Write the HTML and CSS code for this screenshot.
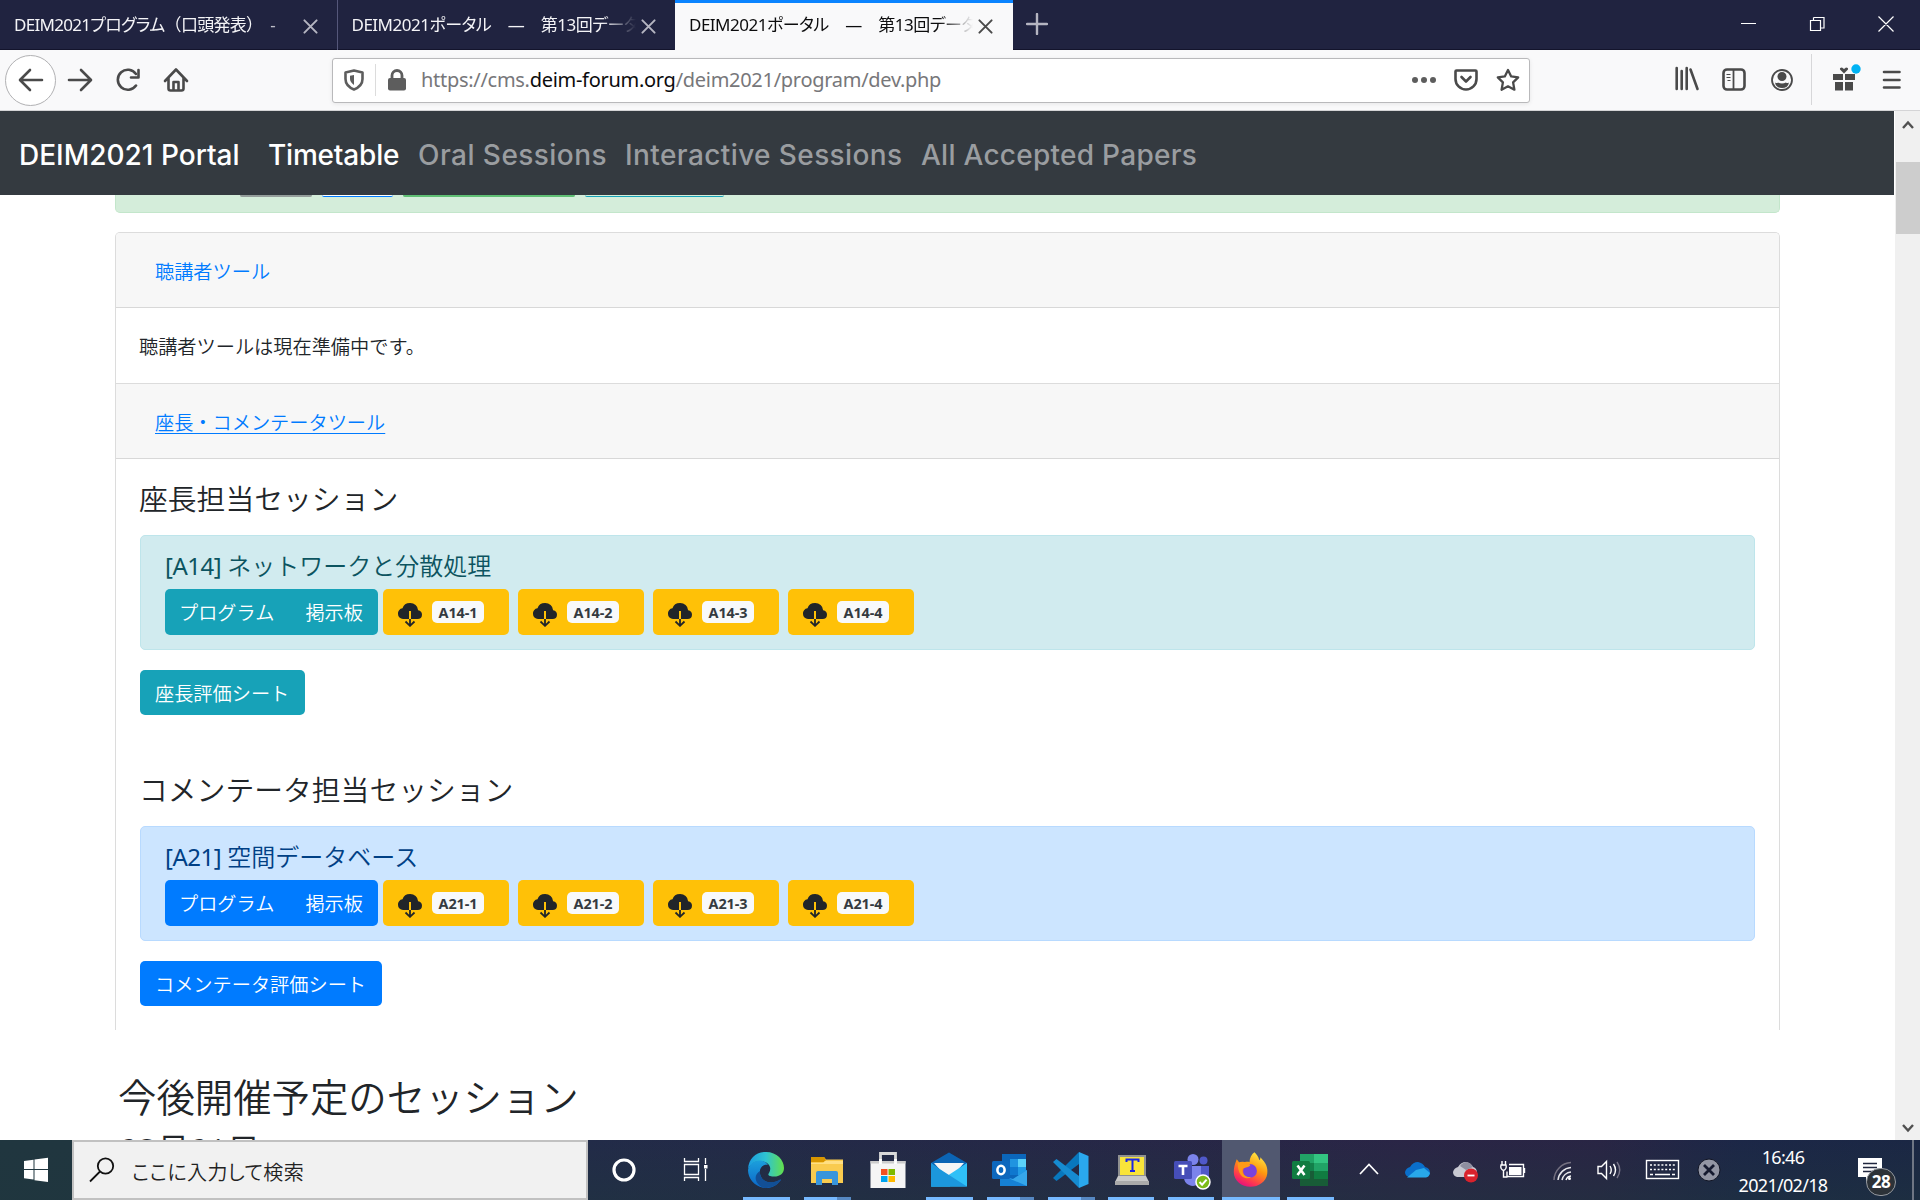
FILE: index.html
```html
<!DOCTYPE html>
<html lang="ja">
<head>
<meta charset="utf-8">
<title>DEIM2021ポータル</title>
<link rel="stylesheet" href="styles.css">
</head>
<body>
<svg class="defs" width="0" height="0">
  <defs>
    <symbol id="cloud" viewBox="0 0 24 24">
      <path fill="#212529" d="M11 16V8h2v8h6.500A4.500 4.500 0 0 0 24 11.700a4.600 4.600 0 0 0-3.900-4.500A8 7.500 0 0 0 12 0a7.800 7.200 0 0 0-7.500 5.300A5.200 5.200 0 0 0 0 11a5 5 0 0 0 5 5z"/>
      <path d="M12 16v6.500M7.500 18.500l4.500 4.300 4.500-4.300" stroke="#212529" stroke-width="1.800" fill="none"/>
    </symbol>
    <symbol id="close" viewBox="0 0 16 16"><path d="M1.500 1.500l13 13m0-13l-13 13" stroke="currentColor" stroke-width="2.100" stroke-linecap="round"/></symbol>
  </defs>
</svg>

<header class="tabs">
  <div class="tab"><span class="tab-title t1">DEIM2021プログラム<span class="full">（口頭発表）</span>　-</span><svg class="x"><use href="#close"/></svg></div>
  <div class="tab"><span class="tab-title">DEIM2021ポータル　—　第13回データ</span><svg class="x"><use href="#close"/></svg></div>
  <div class="tab active"><span class="tab-title">DEIM2021ポータル　—　第13回データ</span><svg class="x"><use href="#close"/></svg></div>
  <svg class="plus" viewBox="0 0 22 22"><path d="M11 1v20M1 11h20" stroke="#b5b5c1" stroke-width="2.400" stroke-linecap="round"/></svg>
  <svg class="winctl" viewBox="0 0 160 50" fill="none" stroke="#fff" stroke-width="1.200"><path d="M1 23.500h15M73.500 17.500h10.500v10.500h-3M70.500 20.500h10v10h-10zM73.500 20v-2.500M138.500 16.500l15 15m0-15l-15 15"/></svg>
</header>

<div class="toolbar">
  <div class="back"><svg width="26" height="24" viewBox="0 0 26 24"><path d="M24 12H3M12 2L2 12l10 10" class="ico"/></svg></div>
  <svg class="fwd" width="26" height="24" viewBox="0 0 26 24"><path d="M2 12h21M14 2l10 10-10 10" class="ico"/></svg>
  <svg class="reload" width="24" height="24" viewBox="0 0 24 24"><path d="M20 17.500A10 10 0 1 1 20 6" class="ico"/><path d="M22.500 2v7.500H15" class="ico"/></svg>
  <svg class="home" width="26" height="26" viewBox="0 0 26 26"><path d="M2 14L13 2.500 24 14M5.500 11v10.500q0 2 2 2h11q2 0 2-2V11" class="ico"/><path d="M10.500 22.500v-7.500h5v7.500" class="ico"/></svg>
  <div class="url">
    <svg class="shield" width="20" height="22" viewBox="0 0 20 22"><path d="M10 1.500L18.500 3.500V10q0 7-8.500 10.500Q1.500 17 1.500 10V3.500z" fill="none" stroke="#5d5d5d" stroke-width="2.600" stroke-linejoin="round"/><path d="M10 6v10q-4-3-4-6V6.700z" fill="#5d5d5d"/></svg>
    <i class="sep"></i>
    <svg class="lock" width="20" height="22" viewBox="0 0 20 22"><rect x="1" y="9" width="18" height="12.500" rx="2" fill="#5d5d5d"/><path d="M5 10V6.500a5 5 0 0 1 10 0V10" fill="none" stroke="#5d5d5d" stroke-width="2.800"/></svg>
    <span class="address">https://cms.<b>deim-forum.org</b>/deim2021/program/dev.php</span>
    <svg class="dots" width="26" height="8" viewBox="0 0 26 8" fill="#5d5d5d"><circle cx="4" cy="4" r="3"/><circle cx="13" cy="4" r="3"/><circle cx="22" cy="4" r="3"/></svg>
    <svg class="pocket" width="24" height="22" viewBox="0 0 24 22"><path d="M2.500 1.500h19q1 0 1 1V10a10.500 10.500 0 0 1-21 0V2.500q0-1 1-1z" class="ico"/><path d="M7.500 8l4.500 4.500L16.500 8" class="ico"/></svg>
    <svg class="star" width="24" height="24" viewBox="0 0 24 24"><path d="M12 2l3.200 6.400 7 1-5.100 5 1.300 7.300-6.400-3.400-6.400 3.400 1.300-7.300-5.100-5 7-1z" class="ico thin"/></svg>
  </div>
  <svg class="right" width="245" height="60" viewBox="0 0 245 60">
    <path d="M1.700 18v21M6.700 21v18M11.700 18v21M15.500 19.500L22.500 39" class="ico"/>
    <rect x="48.500" y="19.500" width="21" height="20" rx="3.500" class="ico"/><path d="M58.500 20v20" stroke="#4a4a4a" stroke-width="1.800"/><path d="M51.500 24.500h4M51.500 27.500h4M52.500 30.500h3" stroke="#4a4a4a" stroke-width="1.200"/>
    <circle cx="107" cy="30" r="10" fill="none" stroke="#4a4a4a" stroke-width="1.800"/><circle cx="107" cy="26.500" r="4.500" fill="#4a4a4a"/><path d="M100 32.500q2 1 3 0 4 2 8 0 1 1 3 0-1 5.500-7 5.500t-7-5.500z" fill="#4a4a4a"/>
    <path d="M136.500 4v51" stroke="#d7d7d9"/>
    <path d="M158 24h10v6h-10zM170 24h10v6h-10zM160 32h8v8.500h-8zM170 32h8v8.500h-8zM169 23.500l-4-4q-.5-2 2-2l2 1.500 2-1.500q2.500 0 2 2z" fill="#4a4a4a"/>
    <circle cx="181" cy="19" r="4.700" fill="#00b3f4"/>
    <path d="M209 22h15.500M209 30h15.500M209 37.500h15.500" class="ico"/>
  </svg>
</div>

<div class="view">
  <main class="page">
    <nav class="navbar"><span class="brand">DEIM2021 Portal</span><span class="n1">Timetable</span><span class="n2">Oral Sessions</span><span class="n3">Interactive Sessions</span><span class="n4">All Accepted Papers</span></nav>
    <div class="container">
      <div class="notice"><i class="b gray"></i><i class="b blue"></i><i class="b green"></i><i class="b teal"></i></div>
      <section class="card">
        <div class="card-header"><a>聴講者ツール</a></div>
        <div class="card-body first">聴講者ツールは現在準備中です。</div>
        <div class="card-header second"><a class="u">座長・コメンテータツール</a></div>
        <div class="card-body tools">
          <h4>座長担当セッション</h4>
          <div class="alert info">
            <h5><span>[A14]</span> ネットワークと分散処理</h5>
            <div class="row">
              <div class="group"><span>プログラム</span><span>掲示板</span></div>
              <div class="dl"><svg><use href="#cloud"/></svg><span>A14-1</span></div>
              <div class="dl"><svg><use href="#cloud"/></svg><span>A14-2</span></div>
              <div class="dl"><svg><use href="#cloud"/></svg><span>A14-3</span></div>
              <div class="dl"><svg><use href="#cloud"/></svg><span>A14-4</span></div>
            </div>
          </div>
          <div class="btn info-btn">座長評価シート</div>
          <h4 class="next">コメンテータ担当セッション</h4>
          <div class="alert primary">
            <h5><span>[A21]</span> 空間データベース</h5>
            <div class="row">
              <div class="group"><span>プログラム</span><span>掲示板</span></div>
              <div class="dl"><svg><use href="#cloud"/></svg><span>A21-1</span></div>
              <div class="dl"><svg><use href="#cloud"/></svg><span>A21-2</span></div>
              <div class="dl"><svg><use href="#cloud"/></svg><span>A21-3</span></div>
              <div class="dl"><svg><use href="#cloud"/></svg><span>A21-4</span></div>
            </div>
          </div>
          <div class="btn primary-btn">コメンテータ評価シート</div>
        </div>
      </section>
      <h2>今後開催予定のセッション</h2>
      <h3>03月01日</h3>
    </div>
  </main>
  <div class="scroll">
    <svg width="12" height="10" viewBox="0 0 12 10"><path d="M1 8l5-5.500L11 8" fill="none" stroke="#505050" stroke-width="2.400"/></svg>
    <i class="thumb"></i>
    <svg class="down" width="12" height="10" viewBox="0 0 12 10"><path d="M1 2l5 5.500L11 2" fill="none" stroke="#505050" stroke-width="2.400"/></svg>
  </div>
</div>

<footer class="taskbar">
  <div class="start"><svg width="26" height="26" viewBox="0 0 26 26" fill="#fff"><path d="M1 4l9.500-1.300V12H1zM11.500 2.500L25 .8V12H11.500zM1 13h9.500v9.500L1 21.200zM11.500 13H25v12l-13.500-1.800z"/></svg></div>
  <div class="search"><svg width="26" height="26" viewBox="0 0 26 26" fill="none" stroke="#111" stroke-width="1.800"><circle cx="16.500" cy="9" r="7.700"/><path d="M11 14.500L1 24.500"/></svg><span>ここに入力して検索</span></div>
  <div class="tb cortana"><svg viewBox="0 0 60 60"><circle cx="30" cy="30" r="10" fill="none" stroke="#fff" stroke-width="3.200"/></svg></div>
  <div class="tb taskview"><svg viewBox="0 0 60 60" fill="none" stroke="#fff" stroke-width="1.300"><path d="M12.500 18v3.500h14V18M12.500 41v-3.500h14V41M12.500 24.500h14v10h-14zM33.500 18v6M33.500 29v12"/><path d="M32 25h3.500v3.500H32z" fill="#fff" stroke="none"/></svg></div>

  <div class="app run"><svg viewBox="0 0 60 60">
    <defs><linearGradient id="e1" x1="0" x2="1"><stop stop-color="#1a9be0"/><stop offset=".5" stop-color="#2fc3d2"/><stop offset="1" stop-color="#63e04b"/></linearGradient><linearGradient id="e2" x2="0" y2="1"><stop stop-color="#1ca0dc"/><stop offset="1" stop-color="#0b66c8"/></linearGradient></defs>
    <path d="M12 29C13 18 20 12 30 12c11 0 18 8 18 16 0 7-7 10-14 8-2-.6-2-1.600-1-3 4-7-2-12-9-12-6 0-10 4-12 8z" fill="url(#e1)"/>
    <path d="M12 30c2-10 15-13 20-5-6-1-9 4-8 9 2 9 12 11 21 5.500C40 47 33 49 27 47.700 18 46 12 38 12 30z" fill="url(#e2)"/><path d="M24 31c-1 8 7 14 17 10 2-1 4-2 4-1-4 6-10 8-17 8-8-3-12-12-4-17z" fill="#124f96"/></svg></div>
  <div class="app run stack"><svg viewBox="0 0 60 60"><path d="M14 17h13l2 2.500h17V43H14z" fill="#f9cb4f"/><path d="M14 17h13l2 3-2 2H14z" fill="#d89600"/><path d="M14 24h32v-3H28l-2 2H14z" fill="#ffdf83"/><path d="M19 45V33q0-2 2-2h18q2 0 2 2v12h-6v-6H25v6z" fill="#3895dc"/></svg></div>
  <div class="app"><svg viewBox="0 0 60 60"><path d="M22.500 24V13.500h15V24" fill="none" stroke="#d9d9d9" stroke-width="2.800"/><path d="M12.500 21h35v27h-35z" fill="#f5f5f5"/><path d="M12.500 21h35v2.500h-35z" fill="#ccc"/><path d="M22.500 24v-5m15 0v5" stroke="#fff" stroke-width="2.800"/><path d="M23 29h6.500v6H23z" fill="#f25022"/><path d="M30.500 29H37v6h-6.500z" fill="#7fba00"/><path d="M23 36h6.500v6H23z" fill="#00a4ef"/><path d="M30.500 36H37v6h-6.500z" fill="#ffb900"/></svg></div>
  <div class="app run"><svg viewBox="0 0 60 60"><path d="M12 23l18-10.500L48 23v5H12z" fill="#0b64b4"/><path d="M15 23h30L30 40z" fill="#f5f5f5"/><path d="M12 23l19 14v9.500H12z" fill="#1d9fe2"/><path d="M48 23v23.500H12z" fill="#2fc0f7"/><path d="M12 23.500L48 46.500H12z" fill="#1c97dd"/></svg></div>
  <div class="app run stack"><svg viewBox="0 0 60 60"><path d="M22 14h24v25H22z" fill="#0b66ba"/><path d="M30 19h8v8h-8z" fill="#2094e0"/><path d="M38 19h8v8h-8z" fill="#5cd2f8"/><path d="M30 27h8v8h-8z" fill="#0f78cf"/><path d="M38 27h8v8h-8z" fill="#219be5"/><path d="M20 35l13 4 14-9v16H20z" fill="#1681d5"/><path d="M47 30v16L28 38l5 1z" fill="#36a7ea"/><rect x="12" y="21" width="18" height="18" rx="1.500" fill="#0d67bd"/><ellipse cx="21" cy="30" rx="3.600" ry="4.200" fill="none" stroke="#fff" stroke-width="2.600"/></svg></div>
  <div class="app run stack"><svg viewBox="0 0 60 60"><path d="M38 12v12L15.500 41 12 38z" fill="#0877bd"/><path d="M38 48V36L15.500 19 12 22z" fill="#168bd0"/><path d="M38 12l9.500 4v28L38 48z" fill="#2aa8ee"/></svg></div>
  <div class="app run"><svg viewBox="0 0 60 60"><path d="M16 15h28v22H16z" fill="#8f9090"/><path d="M18 17h24v18H18z" fill="#f9e43a"/><path d="M13 42l3-6h28l3 6z" fill="#c9c9c9"/><path d="M13 41h34v4H13z" fill="#aaa"/><path d="M24.500 22v-2.500h12V22M30.500 19.500v11.500m-2.500 0h5" fill="none" stroke="#1b26e5" stroke-width="2"/></svg></div>
  <div class="app run"><svg viewBox="0 0 60 60"><circle cx="31" cy="19.500" r="5.500" fill="#7b83eb"/><circle cx="41.500" cy="20.500" r="4" fill="#5059c9"/><path d="M36 26h11v12q-3 5-9 3z" fill="#5059c9"/><path d="M22 26h17v15q-5 7-12 4-5-2-5-8z" fill="#7b83eb"/><rect x="12" y="21" width="18" height="18" rx="1.500" fill="#464eb8"/><path d="M16.500 26h9M21 26v9" stroke="#fff" stroke-width="2.600"/><circle cx="41" cy="42" r="7" fill="#7cba18" stroke="#fff" stroke-width="1.500"/><path d="M37.500 42l2.600 2.700 4.500-5" fill="none" stroke="#fff" stroke-width="2"/></svg></div>
  <div class="app run on"><svg viewBox="0 0 60 60"><defs><linearGradient id="f1" x1=".8" y1="0" x2=".3" y2="1"><stop stop-color="#fff04a"/><stop offset=".45" stop-color="#ff980e"/><stop offset=".8" stop-color="#ff3750"/><stop offset="1" stop-color="#e3107f"/></linearGradient></defs><path d="M34 12c2 2 4 4 5 8 1-1 1-1 1-3 6 6 8 11 7 17-1 8-9 13-17 13-9 0-17-6-17-15 0-5 1-8 3-13l3 4c5-1 8-2 10-1 0-4 2-8 5-10z" fill="url(#f1)"/><circle cx="29.500" cy="31" r="7" fill="#7a42dc"/><path d="M17 23c4-2 8-2 13 2-2 3-5 2-8 4-1 6 4 9 9 8-6 4-14 0-14-14z" fill="#ff9a18"/></svg></div>
  <div class="app run"><svg viewBox="0 0 60 60"><path d="M20 14h28v32H20z" fill="#185c37"/><path d="M20 14h14v9H20z" fill="#21a366"/><path d="M34 14h14v9H34z" fill="#33c481"/><path d="M20 23h14v8H20z" fill="#13804a"/><path d="M34 23h14v8H34z" fill="#21a366"/><path d="M34 31h14v8H34z" fill="#107c41"/><rect x="12" y="21" width="18" height="18" rx="1.500" fill="#107c41"/><path d="M17.500 25.500l7 9.500m0-9.500l-7 9.500" stroke="#fff" stroke-width="2.600"/></svg></div>

  <svg class="tray" width="390" height="60" viewBox="0 0 390 60" fill="none">
    <path d="M10 34l9-9.500 9 9.500" stroke="#fff" stroke-width="1.700"/>
    <path d="M59 37q-4-1-4-5 1-4 5-5 3-5 8-5 5 1 7 5 5 1 5 6-1 4-4 4z" fill="#0a6fcb"/><path d="M57 37.500l9-7.500 8-2 6 5q-1 4-4 4.500z" fill="#28a8ea"/>
    <path d="M107 37q-4-1-4-5 1-4 5-5 3-5 8-5 5 1 7 5 4 1 4 6-1 4-4 4z" fill="#c8c9d2"/><path d="M110 26q3-4 7-4 4 1 6 5l-7 3z" fill="#8e8fa0"/><circle cx="121" cy="35.500" r="7" fill="#d9222c"/><path d="M117.500 35.500h7" stroke="#fff" stroke-width="1.800"/>
    <path d="M151 25h5q1 4-2.500 5.500Q150 29 151 25zM152 21v4M155.500 21v4M153.500 30v7h4M159 24.500h14.500v12H157v-5M174.500 28v5" stroke="#fff" stroke-width="1.400"/><path d="M159 27h12.500v8H159z" fill="#fff"/>
    <path d="M204 40a18 18 0 0 1 17-17.500" stroke="#747080" stroke-width="1.500"/><path d="M208 40a14 14 0 0 1 13-12.500M212 40a10 10 0 0 1 9-8" stroke="#e8e8ec" stroke-width="1.500"/><path d="M216 40a6 6 0 0 1 5-4" stroke="#fff" stroke-width="1.500"/><circle cx="219.500" cy="38.500" r="1.500" fill="#fff"/>
    <path d="M248 26.500h3.500l5-5v17l-5-5H248zM260 26q2.500 4 0 8M263.500 24q4 6 0 12" stroke="#fff" stroke-width="1.400"/><path d="M267 22q5.500 8 0 16" stroke="#777488" stroke-width="1.400"/>
    <rect x="296.500" y="20.500" width="32" height="18" stroke="#fff" stroke-width="1.400"/><path d="M300 25h25M300 29.500h25" stroke="#fff" stroke-width="1.500" stroke-dasharray="2 1.800"/><path d="M300 34.500h3m2 0h15m2 0h3" stroke="#fff" stroke-width="1.500"/>
    <circle cx="359" cy="30" r="11" fill="#9295a4" stroke="#111525" stroke-width="1"/><path d="M354 25l10 10m0-10l-10 10" stroke="#151a30" stroke-width="2.800"/>
  </svg>
  <div class="clock"><span>16:46</span><span>2021/02/18</span></div>
  <div class="note"><svg width="26" height="26" viewBox="0 0 26 26"><path d="M1 0h24v19H13l-4 5v-5H1z" fill="#fff"/><path d="M6 5.500h14M6 9.500h14M6 13.500h14" stroke="#20273f" stroke-width="1.300"/></svg><span class="count">28</span></div>
  <i class="peek"></i>
</footer>
</body>
</html>
```
FILE: styles.css
```css
* { box-sizing: border-box; }
body { margin: 0; width: 1920px; height: 1200px; overflow: hidden; display: flex; flex-direction: column; background: #fff; color: #212529; font: 350 19.2px/1.5 "Noto Sans CJK JP", sans-serif; }
.defs { display: none; }
h2, h3, h4, h5 { margin: 0; font-weight: 350; line-height: 1.2; white-space: nowrap; font-family: "Noto Sans", "Noto Sans CJK JP", sans-serif; }
.ico { fill: none; stroke: #4a4a4a; stroke-width: 2.600; stroke-linecap: round; stroke-linejoin: round; }
.ico.thin { stroke-width: 2.300; }

/* browser tabs */
.tabs { height: 50px; flex: none; display: flex; background: #202340; border-bottom: 1px solid #13142c; }
.tab { width: 337.500px; height: 50px; flex: none; display: flex; align-items: center; padding: 0 18px 0 14px; color: #f4f4f7; border-right: 1px solid #55577a; }
.tab + .tab { border-right-color: #202340; }
.tab-title { width: 284px; flex: none; overflow: hidden; white-space: nowrap; font: 17px/30px "Noto Sans", "Noto Sans CJK JP", sans-serif; font-feature-settings: "palt"; letter-spacing: -.5px; mask-image: linear-gradient(90deg, #000 250px, transparent 284px); }
.t1 { letter-spacing: -.7px; }
.full { font-feature-settings: "palt" 0; }
.tab .x { width: 15px; height: 15px; margin-left: 5px; margin-top: 2px; color: #b5b5c1; }
.tab.active { background: #f9f9fa; color: #0c0c0d; border-top: 3px solid #0a84ff; border-right: 0; padding-bottom: 3px; }
.tab.active .x { color: #4a4a4a; }
.plus { width: 22px; height: 22px; margin: 13px 0 0 13px; }
.winctl { width: 160px; height: 50px; margin-left: auto; margin-right: 20px; }

/* navigation toolbar */
.toolbar { height: 61px; flex: none; display: flex; align-items: center; background: #f9f9fa; border-bottom: 1px solid #d4d4d6; padding-left: 5px; }
.back { width: 51px; height: 51px; border-radius: 50%; border: 1px solid #b1b1b3; background: #fff; display: flex; align-items: center; justify-content: center; }
.fwd { margin-left: 11px; }
.reload { margin-left: 23px; }
.home { margin-left: 23px; }
.url { width: 1198px; height: 45px; margin-left: 143px; display: flex; align-items: center; background: #fff; border: 1px solid #b9b9bb; border-radius: 3px; box-shadow: 0 1px 4px rgba(0,0,0,.08); padding: 0 9px 0 11px; }
.url .sep { width: 1px; height: 32px; background: #dcdcdc; margin: 0 11px; }
.address { font: 20px/30px "Noto Sans", sans-serif; color: #77777a; margin-left: 14px; letter-spacing: -.29px; white-space: nowrap; }
.address b { font-weight: 400; color: #0c0c0d; }
.dots { margin-left: auto; }
.pocket { margin-left: 17px; }
.star { margin-left: 18px; }
.right { margin-left: auto; }

/* page */
.view { height: 1029px; flex: none; display: flex; overflow: hidden; }
.page { width: 1895px; overflow: hidden; background: #fff; }
.navbar { height: 84px; width: 1894px; background: #343a40; display: flex; align-items: center; padding: 3px 0 0 19px; font: 500 28px/42px Inter, sans-serif; color: #9a9da0; white-space: nowrap; }
.brand, .n1 { color: #fff; }
.brand { width: 249px; }
.n1 { width: 150px; letter-spacing: -.2px; }
.n2 { width: 207px; letter-spacing: .45px; }
.n3 { width: 296px; letter-spacing: .4px; }
.n4 { letter-spacing: .27px; }
.container { margin: 0 115px; width: 1665px; }
.notice { height: 18px; background: #d4edda; border: 1px solid #c3e6cb; border-top: 0; border-radius: 0 0 5px 5px; padding-left: 124px; display: flex; gap: 10px; }
.b { height: 2px; border-radius: 0 0 4px 4px; border-bottom: 1px solid; }
.gray { width: 72px; background: #949d9b; border-color: #949d9b; }
.blue { width: 71px; background: #fff; border-color: #007bff; }
.green { width: 172px; background: #5fbf74; border-color: #5fbf74; }
.teal { width: 139px; background: #d4edda; border-color: #17a2b8; }
.card { height: 798px; margin-top: 19px; border: 1px solid #dcdcdc; border-bottom: 0; border-radius: 5px 5px 0 0; overflow: hidden; }
.card-header { height: 75px; background: #f7f7f7; border-bottom: 1px solid #d8d8d8; padding: 24px 39px; }
.card-header a { color: #007bff; }
.card-header .u { text-decoration: underline; text-decoration-thickness: 1px; text-underline-offset: 3px; }
.card-header.second { height: 76px; border-top: 1px solid #dcdcdc; }
.card-body { padding: 24px 24px 0 23px; }
.card-body.first { height: 75px; }
.tools h4 { font-size: 28.800px; height: 35px; }
.alert { margin-top: 18px; margin-left: 1px; height: 115px; padding: 12px 24px 0; border: 1px solid; border-radius: 5px; }
.alert h5 { font-size: 24px; height: 41px; line-height: 35px; }
.alert h5 span { letter-spacing: -.5px; font-weight: 400; }
.info { background: #d1ebef; border-color: #bee5eb; color: #0c5460; }
.primary { background: #cce5ff; border-color: #b8daff; color: #004085; }
.row { display: flex; }
.group { width: 213px; height: 46px; display: flex; justify-content: space-between; padding: 9px 15px 0 14px; border-radius: 5px; background: #17a2b8; color: #fff; margin-right: 5px; }
.primary .group { background: #007bff; }
.dl { width: 126px; height: 46px; margin-right: 9px; border-radius: 5px; background: #ffc107; padding: 12px 15px; display: flex; }
.dl svg { width: 24px; height: 24px; margin-top: 2px; }
.dl span { width: 52px; height: 22px; margin-left: 10px; border-radius: 5px; background: #f8f9fa; color: #343a40; font: bold 14.400px/23px "Noto Sans", sans-serif; text-align: center; letter-spacing: -.1px; }
.btn { height: 45px; margin: 20px 0 0 1px; border-radius: 5px; color: #fff; padding: 9px 14px 0 15px; white-space: nowrap; }
.info-btn { width: 165px; background: #17a2b8; }
.primary-btn { width: 242px; background: #007bff; }
.tools h4.next { margin-top: 58px; }
.tools { padding-top: 23px; }
h2 { font-size: 38.400px; margin: 44px 0 0 3px; height: 46px; }
h3 { font-size: 33.600px; margin: 10px 0 0 4px; letter-spacing: -.5px; }
.scroll { width: 25px; background: #f0f0f0; display: flex; flex-direction: column; align-items: center; padding: 9px 0 7px; }
.thumb { width: 24px; height: 72px; margin-top: 32px; background: #cdcdcd; }
.down { margin-top: auto; }

/* taskbar */
.taskbar { height: 60px; flex: none; display: flex; background: linear-gradient(180deg, rgba(31,50,62,0), rgba(31,54,62,.45)), linear-gradient(90deg, #20363f 0, #20363f 80px, #222b48 590px, #252847 1000px, #2a2546 1400px, #292544 1600px, #1c2747 1740px, #1b2744 1920px); }
.start { width: 72px; padding: 17px 0 0 23px; }
.search { width: 516px; height: 60px; border: 2px solid #c1c1c1; background: #f1f1f1; display: flex; padding: 15px 0 0 15px; color: #222; }
.search span { margin-left: 17px; font: 350 20px/30px "Noto Sans CJK JP", sans-serif; font-feature-settings: "palt"; letter-spacing: .4px; }
.tb { width: 72px; height: 60px; }
.tb svg, .app svg { width: 60px; height: 60px; display: block; }
.cortana svg { margin-left: 6px; }
.taskview { width: 76px; }
.taskview svg { margin-left: 12px; }
.app { width: 61px; height: 60px; flex: none; display: flex; background: no-repeat 7px 57px / 47px 3px; }
.app.run { background-image: linear-gradient(#76b9ff, #76b9ff); }
.app.stack { background-image: linear-gradient(90deg, #76b9ff 33px, #5688c2 33px); }
.app:nth-child(11), .app:nth-child(12) { width: 60px; background-position-x: 6px; background-size: 46px 3px; }
.app.on { width: 58px; background-color: #515870; background-size: 58px 3px; background-position-x: 0; }
.app.on svg { margin-left: -1px; }
.tray { flex: none; margin-left: 9px; }
.clock { width: 106px; margin-left: -10px; display: flex; flex-direction: column; align-items: center; padding-top: 3px; color: #fff; font: 18px/28px "Noto Sans", sans-serif; letter-spacing: -.7px; }
.note { position: relative; margin: 18px 0 0 21px; width: 26px; }
.count { position: absolute; left: 9px; top: 10px; width: 30px; height: 28px; border-radius: 14px; border: 1px solid #969aa0; background: #2c3238; color: #fff; font: bold 17px/25px "Noto Sans", sans-serif; text-align: center; letter-spacing: -.5px; }
.peek { width: 2px; height: 60px; background: #6f7684; margin-left: auto; margin-right: 6px; }
```
